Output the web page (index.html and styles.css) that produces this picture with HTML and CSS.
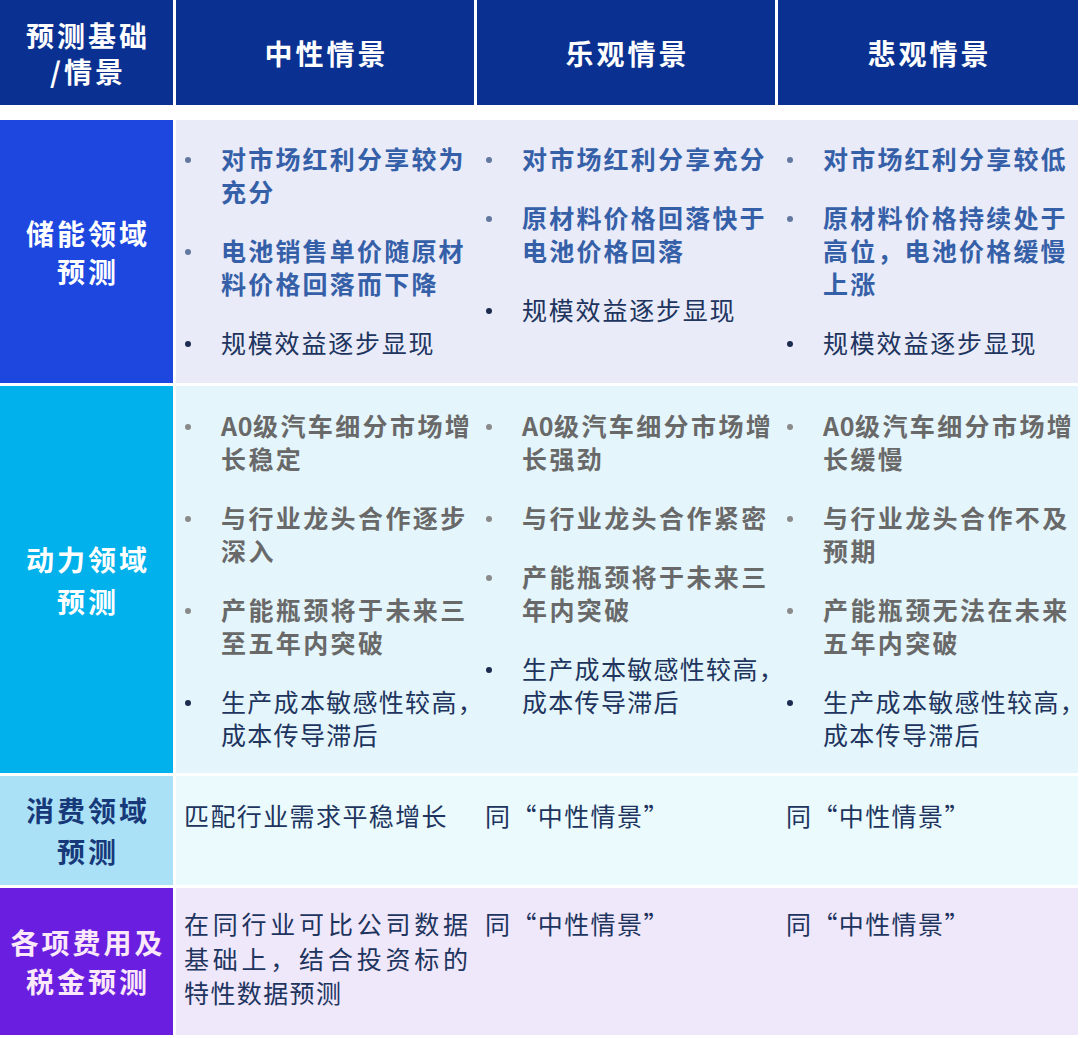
FILE: index.html
```html
<!DOCTYPE html>
<html lang="zh-CN">
<head>
<meta charset="utf-8">
<title>预测情景</title>
<link rel="stylesheet" href="styles.css">
</head>
<body>
<div class="table">
  <div class="head">
    <div class="hcell">预测基础<br>/情景</div>
    <div class="hcell">中性情景</div>
    <div class="hcell">乐观情景</div>
    <div class="hcell">悲观情景</div>
  </div>

  <div class="row row-storage">
    <div class="label">储能领域<br>预测</div>
    <div class="content">
      <ul class="list">
        <li class="hl"><span class="t">对市场红利分享较为<br>充分</span></li>
        <li class="hl"><span class="t">电池销售单价随原材<br>料价格回落而下降</span></li>
        <li><span class="t">规模效益逐步显现</span></li>
      </ul>
      <ul class="list">
        <li class="hl"><span class="t">对市场红利分享充分</span></li>
        <li class="hl"><span class="t">原材料价格回落快于<br>电池价格回落</span></li>
        <li><span class="t">规模效益逐步显现</span></li>
      </ul>
      <ul class="list">
        <li class="hl"><span class="t">对市场红利分享较低</span></li>
        <li class="hl"><span class="t">原材料价格持续处于<br>高位，电池价格缓慢<br>上涨</span></li>
        <li><span class="t">规模效益逐步显现</span></li>
      </ul>
    </div>
  </div>

  <div class="row row-power">
    <div class="label">动力领域<br>预测</div>
    <div class="content">
      <ul class="list">
        <li class="muted"><span class="t"><span class="latin">A0</span>级汽车细分市场增<br>长稳定</span></li>
        <li class="muted"><span class="t">与行业龙头合作逐步<br>深入</span></li>
        <li class="muted"><span class="t">产能瓶颈将于未来三<br>至五年内突破</span></li>
        <li class="long"><span class="t">生产成本敏感性较高<span class="punct">，</span><br>成本传导滞后</span></li>
      </ul>
      <ul class="list">
        <li class="muted"><span class="t"><span class="latin">A0</span>级汽车细分市场增<br>长强劲</span></li>
        <li class="muted"><span class="t">与行业龙头合作紧密</span></li>
        <li class="muted"><span class="t">产能瓶颈将于未来三<br>年内突破</span></li>
        <li class="long"><span class="t">生产成本敏感性较高<span class="punct">，</span><br>成本传导滞后</span></li>
      </ul>
      <ul class="list">
        <li class="muted"><span class="t"><span class="latin">A0</span>级汽车细分市场增<br>长缓慢</span></li>
        <li class="muted"><span class="t">与行业龙头合作不及<br>预期</span></li>
        <li class="muted"><span class="t">产能瓶颈无法在未来<br>五年内突破</span></li>
        <li class="long"><span class="t">生产成本敏感性较高<span class="punct">，</span><br>成本传导滞后</span></li>
      </ul>
    </div>
  </div>

  <div class="row row-consumer">
    <div class="label">消费领域<br>预测</div>
    <div class="content">
      <div class="plain">匹配行业需求平稳增长</div>
      <div class="plain">同“中性情景”</div>
      <div class="plain">同“中性情景”</div>
    </div>
  </div>

  <div class="row row-cost">
    <div class="label">各项费用及<br>税金预测</div>
    <div class="content">
      <div class="plain"><span class="just">在同行业可比公司数据</span><span class="just">基础上，结合投资标的</span><span class="line">特性数据预测</span></div>
      <div class="plain">同“中性情景”</div>
      <div class="plain">同“中性情景”</div>
    </div>
  </div>
</div>
</body>
</html>
```

FILE: styles.css
```css
* {
  box-sizing: border-box;
  margin: 0;
  padding: 0;
}

body {
  margin: 0;
  background: #ffffff;
  font-family: "Noto Sans CJK SC", "Noto Sans", sans-serif;
}

.table {
  width: 1078px;
}

/* header */
.head {
  display: grid;
  grid-template-columns: 173px 298px 298px 1fr;
  column-gap: 3px;
  height: 105px;
  margin-bottom: 15px;
}

.hcell {
  background: #0a3191;
  color: #ffffff;
  font-weight: 700;
  font-size: 28px;
  line-height: 36px;
  letter-spacing: 3px;
  padding-left: 3px;
  display: flex;
  align-items: center;
  justify-content: center;
  text-align: center;
}

/* body rows */
.row {
  display: grid;
  grid-template-columns: 173px 1fr;
  column-gap: 3px;
  margin-bottom: 3px;
}

.label {
  display: flex;
  align-items: center;
  justify-content: center;
  text-align: center;
  font-weight: 700;
  font-size: 28px;
  letter-spacing: 3px;
  padding-left: 3px;
  color: #ffffff;
}

.content {
  display: grid;
  grid-template-columns: 301px 301px 1fr;
}

.row-storage { height: 263px; }
.row-storage .label { background: #1d47df; line-height: 38px; }
.row-storage .content { background: #e9ebf8; }

.row-power { height: 387px; }
.row-power .label { background: #00b1eb; line-height: 42px; }
.row-power .content { background: #e4f5fb; }
.row-power .list { padding-top: 22.5px; }

.row-consumer { height: 109px; }
.row-consumer .label { background: #aae1f6; color: #17397a; line-height: 41px; }
.row-consumer .content { background: #eafafd; }

.row-cost { height: 147px; }
.row-cost .label { background: #6a1ee0; color: #fbe8f8; line-height: 39px; }
.row-cost .content { background: #efe7fa; }

/* bullet lists */
.list {
  list-style: none;
  padding-top: 21.5px;
}

.list li {
  display: flex;
  font-size: 25px;
  line-height: 33px;
  letter-spacing: 1.8px;
  color: #20345e;
}

.list li + li {
  margin-top: 26px;
}

.list li::before {
  content: "";
  flex: none;
  width: 6px;
  height: 6px;
  border-radius: 50%;
  background: #1c2b50;
  margin: 15px 0 0 9px;
}

.list .t {
  margin-left: 30px;
  white-space: nowrap;
}

.list li.long {
  letter-spacing: 1.3px;
}

.list .punct {
  letter-spacing: 0;
  margin-right: -14px;
}

.list li.hl {
  color: #3560a8;
  font-weight: 700;
  letter-spacing: 2.2px;
}

.list li.hl::before {
  background: #62789f;
}

.list li.muted {
  color: #696969;
  font-weight: 700;
  letter-spacing: 2.4px;
}

.list li.muted::before {
  background: #8a8a8a;
}

.list .latin {
  letter-spacing: 0.6px;
}

/* plain text cells */
.plain {
  padding: 22px 0 0 8px;
  font-size: 25px;
  line-height: 34px;
  letter-spacing: 1.4px;
  color: #20345e;
  white-space: nowrap;
}

.row-cost .plain {
  padding-top: 18px;
  line-height: 34.5px;
}

.plain .just {
  display: block;
  width: 284px;
  text-align: justify;
  text-align-last: justify;
  letter-spacing: 0;
}

.plain .line {
  display: block;
}
```
